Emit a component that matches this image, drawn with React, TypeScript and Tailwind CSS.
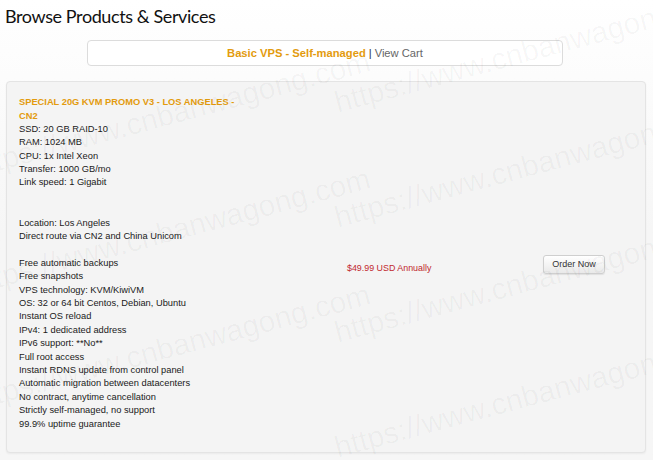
import React from "react";

const features: string[] = [
  "SSD: 20 GB RAID-10",
  "RAM: 1024 MB",
  "CPU: 1x Intel Xeon",
  "Transfer: 1000 GB/mo",
  "Link speed: 1 Gigabit",
  "",
  "",
  "Location: Los Angeles",
  "Direct route via CN2 and China Unicom",
  "",
  "Free automatic backups",
  "Free snapshots",
  "VPS technology: KVM/KiwiVM",
  "OS: 32 or 64 bit Centos, Debian, Ubuntu",
  "Instant OS reload",
  "IPv4: 1 dedicated address",
  "IPv6 support: **No**",
  "Full root access",
  "Instant RDNS update from control panel",
  "Automatic migration between datacenters",
  "No contract, anytime cancellation",
  "Strictly self-managed, no support",
  "99.9% uptime guarantee",
];

const marks: { left: number; top: number }[] = [
  { left: 335, top: 80 },
  { left: 335, top: 195 },
  { left: 335, top: 310 },
  { left: -30, top: 145 },
  { left: -30, top: 262 },
  { left: -30, top: 378 },
  { left: 335, top: 425 },
];

export default function App() {
  return (
    <div
      className="relative w-[653px] h-[460px] overflow-hidden bg-gradient-to-b from-white via-[#f6f6f6] to-[#f6f6f6]"
      style={{ fontFamily: '"Liberation Sans", Arial, sans-serif' }}
    >
      <div className="px-[5px] pt-[4px]">
        <h1
          className="text-[18px] leading-[24px] text-[#111] tracking-[-0.4px]"
          style={{ fontFamily: 'Lato, "Open Sans", sans-serif' }}
        >
          Browse Products &amp; Services
        </h1>
      </div>

      <div className="flex justify-center mt-[12px]">
        <div className="w-[476px] h-[26px] ml-[-3px] bg-white border border-[#dcdcdc] rounded-[4px] flex items-center justify-center text-[11.2px]">
          <span className="font-bold text-[#e39b0e]">Basic VPS - Self-managed</span>
          <span className="text-[#333] mx-[3px]">|</span>
          <span className="text-[#666]">View Cart</span>
        </div>
      </div>

      <div className="mx-[6px] mt-[15px] h-[372px] w-[640px] bg-[#f4f4f4] border border-[#e4e4e4] rounded-[4px] shadow-[0_1px_2px_rgba(0,0,0,0.05)] flex items-center pl-[12px]">
        <div className="w-[328px] mt-[-7px]">
          <div className="w-[226px] text-[9.3px] leading-[13.4px] font-bold text-[#e39b0e] uppercase">
            SPECIAL 20G KVM PROMO V3 - LOS ANGELES - CN2
          </div>
          <div className="text-[9.3px] leading-[13.4px] text-[#1a1a1a]">
            {features.map((f, i) => (
              <div key={i} className="h-[13.4px]">
                {f}
              </div>
            ))}
          </div>
        </div>
        <div className="w-[196px] text-[8.9px] text-[#c1272d] pt-[4px]">$49.99 USD Annually</div>
        <div className="w-[62px] h-[19px] flex items-center justify-center text-[9px] text-[#333] bg-gradient-to-b from-white to-[#e9e9e9] border border-[#cfcfcf] rounded-[3px] shadow-[0_1px_1px_rgba(0,0,0,0.08)] mb-[5px]">
          Order Now
        </div>
      </div>

      {marks.map((m, i) => (
        <div
          key={i}
          className="absolute pointer-events-none whitespace-nowrap text-[30px] text-black/[0.035] origin-left -rotate-[15deg]"
          style={{ left: m.left, top: m.top, fontFamily: '"Liberation Sans", Arial, sans-serif' }}
        >
          https://www.cnbanwagong.com
        </div>
      ))}
    </div>
  );
}
